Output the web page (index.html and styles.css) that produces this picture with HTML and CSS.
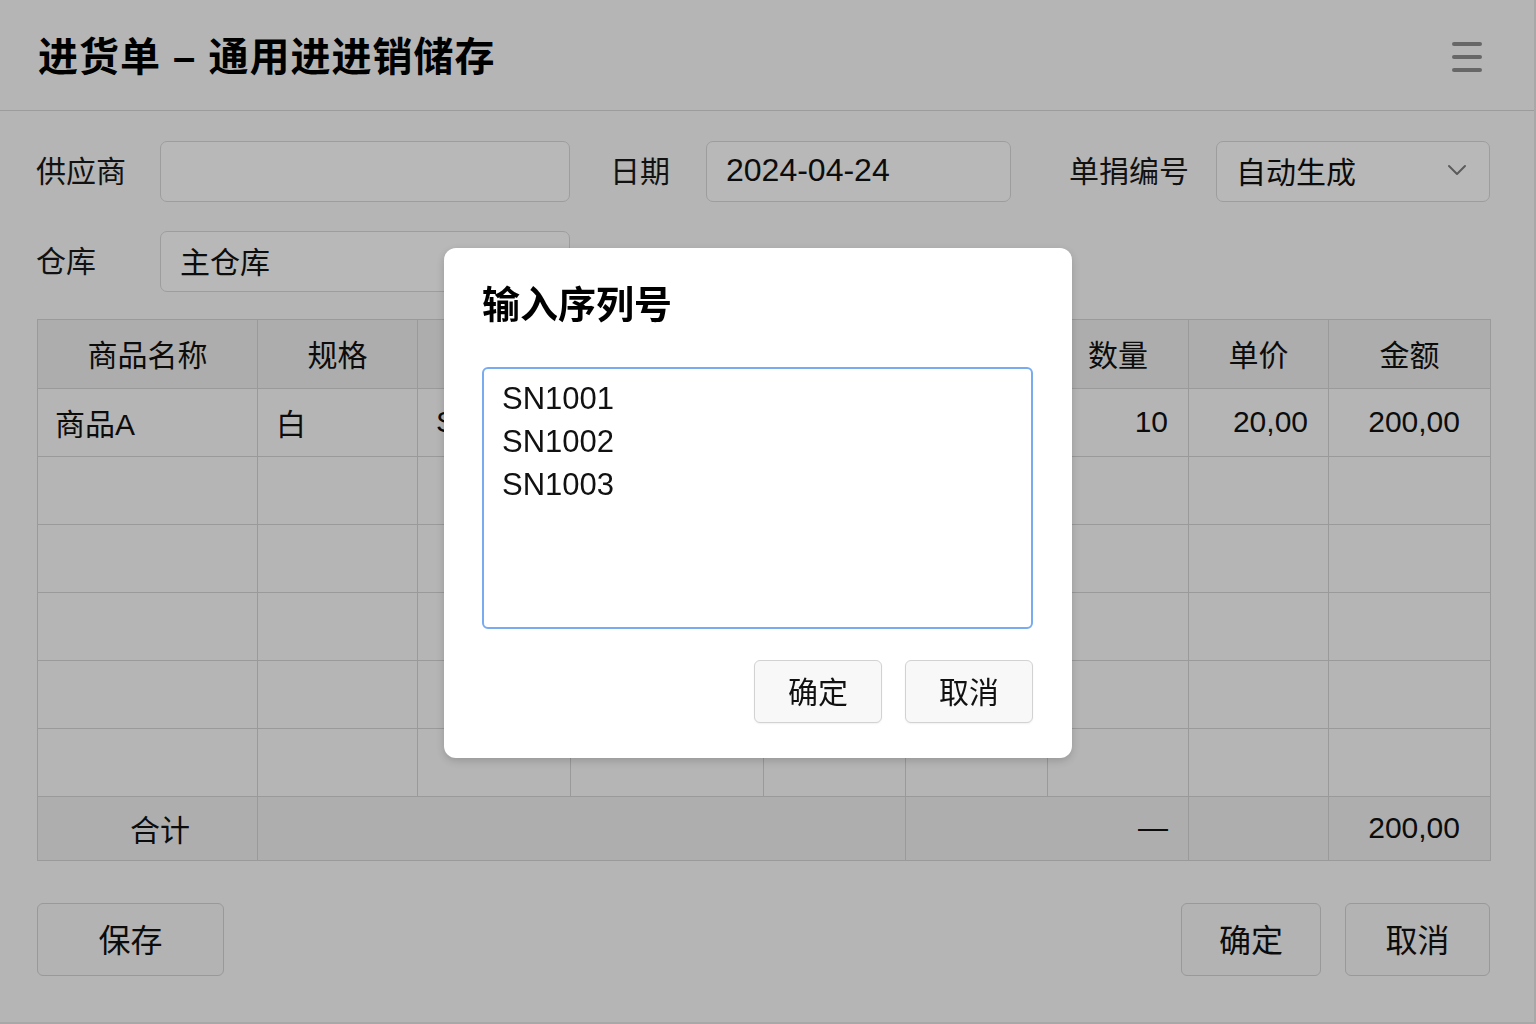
FILE: index.html
```html
<!DOCTYPE html>
<html lang="zh-CN">
<head>
<meta charset="utf-8">
<title>进货单 – 通用进进销储存</title>
<link rel="stylesheet" href="styles.css">
</head>
<body>
<div class="app">
  <header class="topbar">
    <h1 class="title">进货单 – 通用进进销储存</h1>
    <button class="menu" aria-label="菜单">
      <svg width="30" height="30" viewBox="0 0 30 30"><rect x="0" y="0" width="30" height="4" rx="2"/><rect x="0" y="13" width="30" height="4" rx="2"/><rect x="0" y="26" width="30" height="4" rx="2"/></svg>
    </button>
  </header>

  <main class="content">
    <div class="form-row">
      <span class="lbl w-supplier">供应商</span>
      <div class="field f-supplier"></div>
      <span class="lbl w-date">日期</span>
      <div class="field f-date">2024-04-24</div>
      <span class="lbl w-no">单捐编号</span>
      <div class="field f-no">自动生成
        <svg class="chev" width="20" height="12" viewBox="0 0 20 12"><polyline points="2,2 10,10 18,2"/></svg>
      </div>
    </div>
    <div class="form-row row2">
      <span class="lbl w-supplier">仓库</span>
      <div class="field f-supplier">主仓库</div>
    </div>

    <table class="grid">
      <colgroup>
        <col class="c1"><col class="c2"><col class="c3"><col class="c4"><col class="c5"><col class="c6"><col class="c7"><col class="c8"><col class="c9">
      </colgroup>
      <thead>
        <tr><th>商品名称</th><th>规格</th><th>序列号</th><th>单位</th><th>批次</th><th>仓库</th><th>数量</th><th>单价</th><th>金额</th></tr>
      </thead>
      <tbody>
        <tr><td>商品A</td><td class="pl">白</td><td class="pl">SN1001</td><td></td><td></td><td></td><td class="num">10</td><td class="num">20,00</td><td class="num last">200,00</td></tr>
        <tr><td></td><td></td><td></td><td></td><td></td><td></td><td></td><td></td><td></td></tr>
        <tr><td></td><td></td><td></td><td></td><td></td><td></td><td></td><td></td><td></td></tr>
        <tr><td></td><td></td><td></td><td></td><td></td><td></td><td></td><td></td><td></td></tr>
        <tr><td></td><td></td><td></td><td></td><td></td><td></td><td></td><td></td><td></td></tr>
        <tr><td></td><td></td><td></td><td></td><td></td><td></td><td></td><td></td><td></td></tr>
      </tbody>
      <tfoot>
        <tr><td class="sum-label">合计</td><td colspan="4"></td><td colspan="2" class="num">—</td><td></td><td class="num last">200,00</td></tr>
      </tfoot>
    </table>

    <div class="actions">
      <button class="btn btn-save">保存</button>
      <div class="actions-right">
        <button class="btn btn-ok">确定</button>
        <button class="btn btn-cancel">取消</button>
      </div>
    </div>
  </main>
</div>

<div class="overlay"></div>
<div class="modal" role="dialog">
  <h2 class="modal-title">输入序列号</h2>
  <textarea class="sn-input">SN1001
SN1002
SN1003</textarea>
  <div class="modal-actions">
    <button class="mbtn">确定</button>
    <button class="mbtn">取消</button>
  </div>
</div>
</body>
</html>
```

FILE: styles.css
```css
* { box-sizing: border-box; }
html, body { margin: 0; padding: 0; }
body {
  width: 1536px;
  height: 1024px;
  overflow: hidden;
  background: #f9f9f9;
  color: #111;
  font-family: "Liberation Sans", "Noto Sans CJK SC", sans-serif;
}
.app {
  height: 1024px;
  border-right: 2px solid #e6e6e6;
  border-bottom: 2px solid #e6e6e6;
}
.topbar {
  height: 111px;
  border-bottom: 1px solid #d6d6d6;
  display: flex;
  align-items: center;
  justify-content: space-between;
  padding: 4px 52px 0 38px;
}
.title {
  margin: 0;
  font-size: 40px;
  font-weight: 700;
  line-height: 1;
  letter-spacing: 1px;
  color: #000;
}
.menu {
  border: 0;
  background: none;
  padding: 0;
  width: 30px;
  height: 30px;
  display: block;
}
.menu svg { display: block; fill: #8e8e8e; }

.content { padding: 30px 44px 0 36px; }
.form-row {
  display: flex;
  align-items: center;
  height: 61px;
}
.row2 { margin-top: 29px; }
.lbl { font-size: 30px; color: #1a1a1a; padding-bottom: 5px; }
.w-supplier { width: 124px; flex: none; }
.w-date { width: 96px; margin-left: 40px; flex: none; }
.w-no { width: 147px; margin-left: 58px; flex: none; }
.field {
  flex: none;
  height: 61px;
  border: 1px solid #d8d8d8;
  border-radius: 7px;
  background: #fdfdfd;
  padding: 0 19px 3px;
  display: flex;
  align-items: center;
  font-size: 30px;
}
.f-supplier { width: 410px; }
.f-date { width: 305px; font-size: 32px; }
.f-no { width: 274px; justify-content: space-between; padding-right: 22px; }
.chev { fill: none; stroke: #7d7d7d; stroke-width: 2; stroke-linecap: round; stroke-linejoin: round; }

.grid {
  margin: 27px 0 0 1px;
  width: 1453px;
  table-layout: fixed;
  border-collapse: collapse;
  font-size: 30px;
}
.c1 { width: 220px; } .c2 { width: 160px; } .c3 { width: 153px; }
.c4 { width: 193px; } .c5 { width: 142px; } .c6 { width: 142px; }
.c7 { width: 141px; } .c8 { width: 140px; } .c9 { width: 162px; }
.grid th, .grid td {
  border: 1px solid #d3d3d3;
  padding: 0 17px 2px;
  white-space: nowrap;
  overflow: hidden;
}
.grid th {
  height: 69px;
  background: #eeeeee;
  font-weight: 400;
  text-align: center;
}
.grid td { height: 68px; background: #f9f9f9; }
.grid td.pl { padding-left: 18px; }
.grid td.num { text-align: right; padding-right: 20px; }
.grid td.last { padding-right: 30px; }
.grid tfoot td { height: 64px; background: #efefef; }
.grid .sum-label { text-align: center; padding-left: 42px; }

.actions {
  margin-top: 42px;
  display: flex;
  justify-content: space-between;
  padding-left: 1px;
}
.actions-right { display: flex; gap: 24px; }
.btn {
  flex: none;
  height: 73px;
  border: 1px solid #d2d2d2;
  border-radius: 6px;
  background: #f6f6f6;
  font-family: inherit;
  font-size: 32px;
  color: #111;
  padding: 0 0 3px;
}
.btn-save { width: 187px; }
.btn-ok { width: 140px; }
.btn-cancel { width: 145px; }

.overlay {
  position: fixed;
  inset: 0;
  background: rgba(0, 0, 0, 0.27);
  z-index: 10;
}
.modal {
  position: fixed;
  left: 444px;
  top: 248px;
  width: 628px;
  height: 510px;
  background: #fff;
  border-radius: 12px;
  box-shadow: 0 3px 10px rgba(0, 0, 0, 0.18);
  z-index: 11;
  padding: 35px 39px 0 38px;
}
.modal-title {
  margin: 0;
  font-size: 38px;
  font-weight: 700;
  line-height: 44px;
  color: #000;
}
.sn-input {
  display: block;
  margin-top: 40px;
  width: 551px;
  height: 262px;
  border: 2px solid #78abef;
  border-radius: 6px;
  padding: 8px 18px;
  font-family: "Liberation Sans", "Noto Sans CJK SC", sans-serif;
  font-size: 31px;
  line-height: 43px;
  color: #111;
  resize: none;
  outline: none;
  background: #fff;
}
.modal-actions {
  margin-top: 31px;
  display: flex;
  justify-content: flex-end;
  gap: 23px;
}
.mbtn {
  width: 128px;
  height: 63px;
  border: 1px solid #d2d2d2;
  border-radius: 6px;
  background: #f8f8f8;
  font-family: inherit;
  font-size: 30px;
  color: #111;
  padding: 0 0 3px;
  box-shadow: 0 1px 2px rgba(0, 0, 0, 0.06);
}
```
